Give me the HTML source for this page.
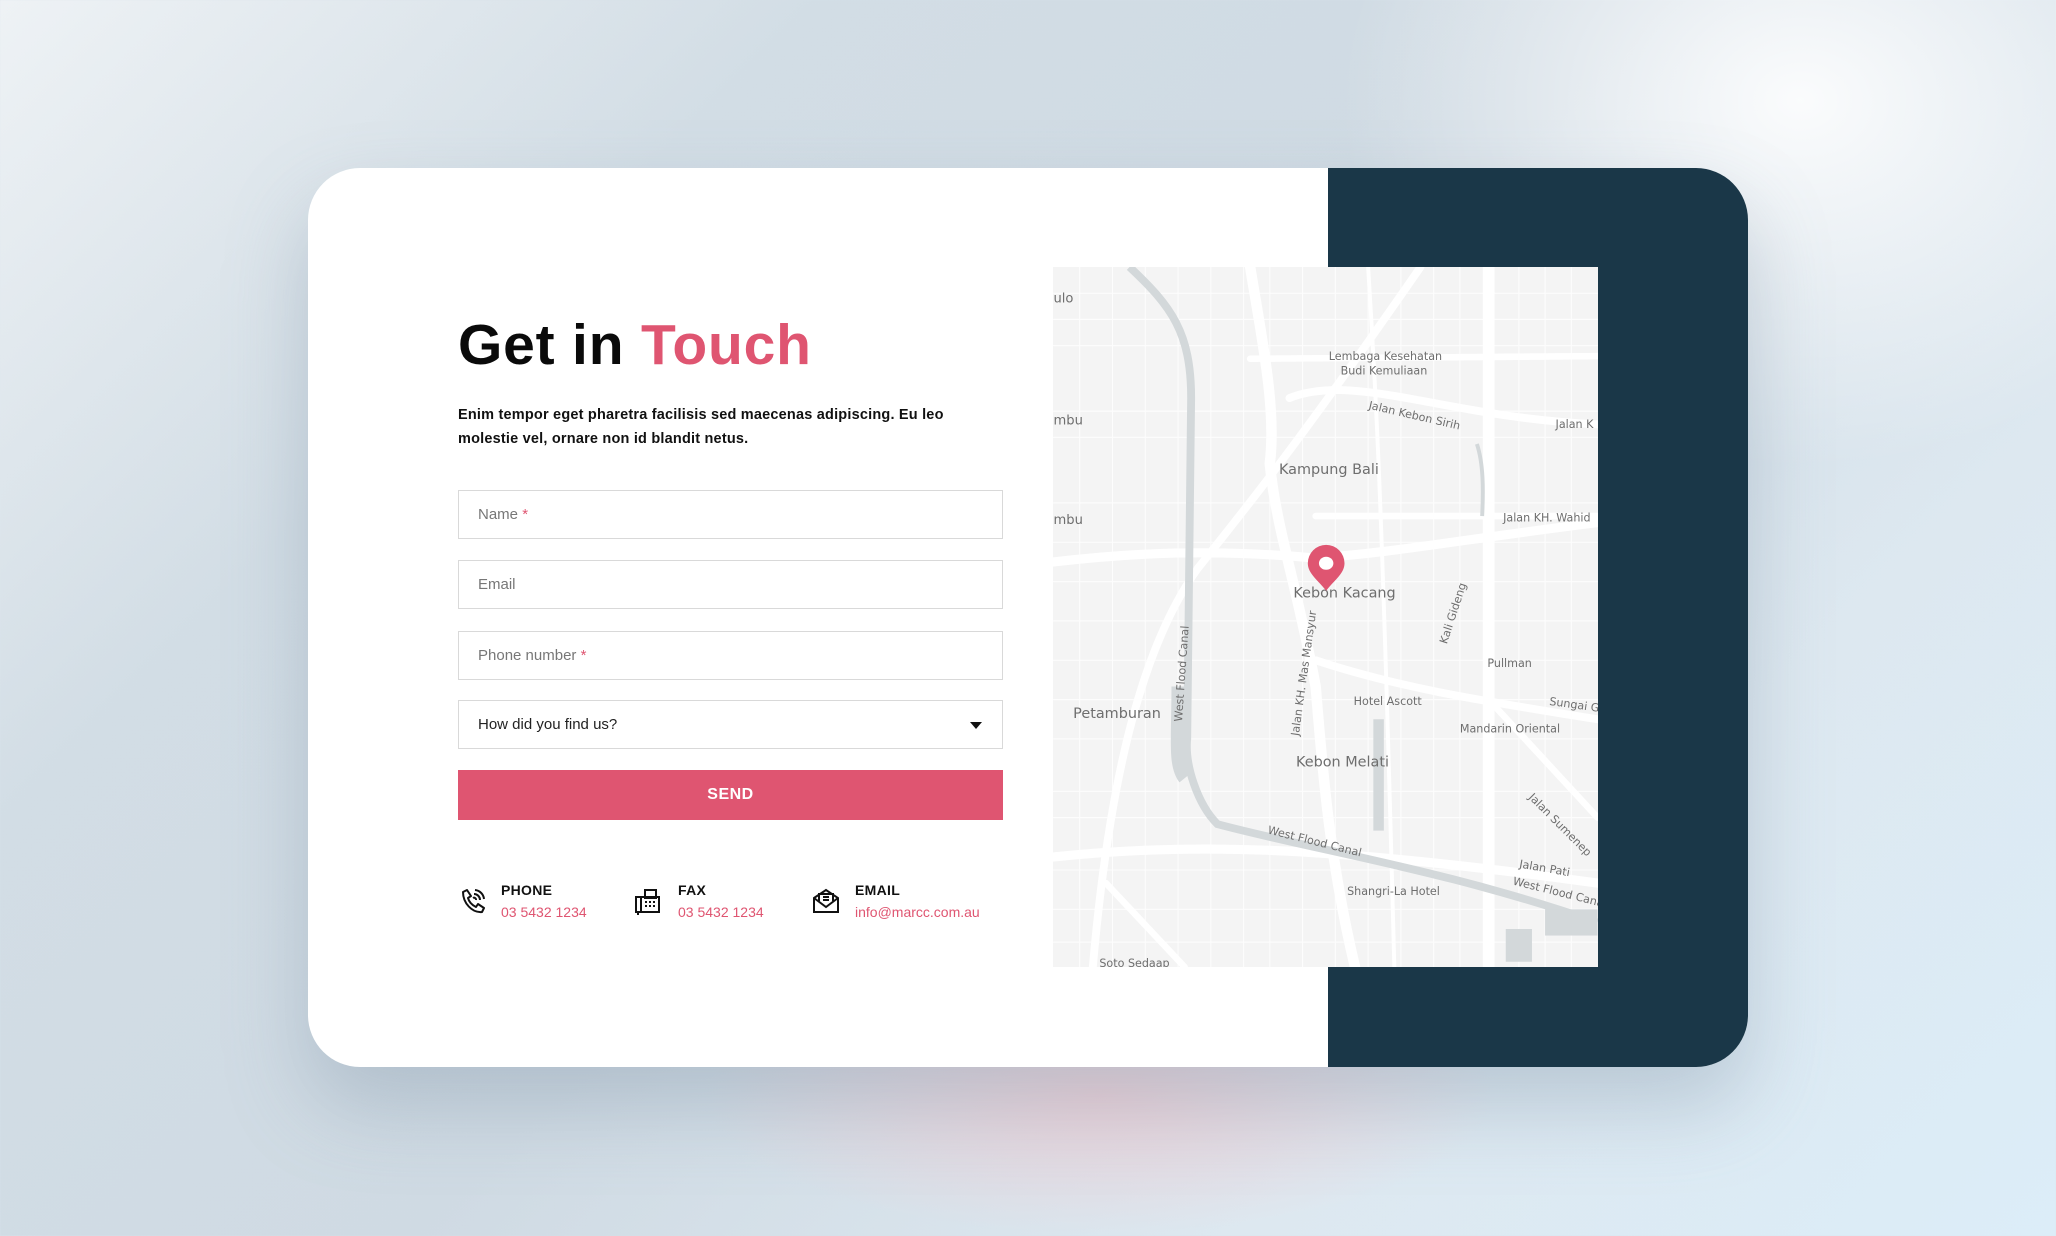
<!DOCTYPE html>
<html><head><meta charset="utf-8"><style>
*{margin:0;padding:0;box-sizing:border-box}
html,body{width:2056px;height:1236px;overflow:hidden}
body{font-family:"Liberation Sans",sans-serif;background:linear-gradient(135deg,#eef2f5 0%,#d2dde5 25%,#cfdae3 50%,#dde8f0 75%,#dcedf8 100%);position:relative}
.glow1{position:absolute;left:1300px;top:-300px;width:1000px;height:800px;background:radial-gradient(ellipse at center,rgba(255,255,255,.9),rgba(255,255,255,0) 65%)}
.glow2{position:absolute;left:700px;top:1000px;width:800px;height:236px;background:radial-gradient(ellipse at 50% 40%,rgba(240,205,212,.8),rgba(240,205,212,0) 70%)}
.card{position:absolute;left:308px;top:168px;width:1440px;height:899px;background:#fff;border-radius:52px;overflow:hidden;box-shadow:0 40px 80px rgba(120,140,160,.35)}
.dark{position:absolute;left:1020px;top:0;right:0;bottom:0;background:#1a3748}
h1{position:absolute;left:150px;top:144px;font-size:57px;font-weight:bold;color:#0a0a0a;letter-spacing:0.8px;white-space:nowrap}
h1 span{color:#df5571}
p.lead{position:absolute;left:150px;top:235px;width:540px;font-size:14.5px;font-weight:bold;line-height:24px;color:#111;letter-spacing:.2px}
.in{position:absolute;left:150px;width:545px;height:49px;border:1px solid #d9d9d9;font-size:15px;color:#777;padding:15px 19px}
.in b{color:#df5571;font-weight:normal}
.sel{color:#222}
.arr{position:absolute;right:20px;top:21px;border-left:6px solid transparent;border-right:6px solid transparent;border-top:7px solid #111}
.send{position:absolute;left:150px;top:602px;width:545px;height:50px;background:#df5571;color:#fff;font-weight:bold;font-size:16px;text-align:center;line-height:50px;letter-spacing:.5px}
.ct{position:absolute;top:714px}
.ct .t{font-size:14px;font-weight:bold;color:#111;letter-spacing:.3px}
.ct .v{font-size:14px;color:#df5571;margin-top:6px}
.ic{position:absolute;top:720px}
.map{position:absolute;left:745px;top:99px;width:545px;height:700px;background:#f4f4f4;overflow:hidden}
</style></head><body>
<div class="glow1"></div><div class="glow2"></div>
<div class="card">
<div class="dark"></div>
<h1>Get in <span>Touch</span></h1>
<p class="lead">Enim tempor eget pharetra facilisis sed maecenas adipiscing. Eu leo molestie vel, ornare non id blandit netus.</p>
<div class="in" style="top:322px">Name <b>*</b></div>
<div class="in" style="top:392px">Email</div>
<div class="in" style="top:463px">Phone number <b>*</b></div>
<div class="in sel" style="top:532px">How did you find us?<div class="arr"></div></div>
<div class="send">SEND</div>

<svg class="ic" style="left:150px" width="28" height="28" viewBox="0 0 28 28" fill="none" stroke="#111" stroke-width="2"><path d="M5 4l4-2 4 6-3 2c1 4 4 7 8 9l2-3 6 4-2 4c-10 1-19-9-19-20z" stroke-linejoin="round"/><path d="M16 6a6 6 0 0 1 6 6M17 2a10 10 0 0 1 9 9M15 10a2 2 0 0 1 3 2"/></svg>
<div class="ct" style="left:193px"><div class="t">PHONE</div><div class="v">03 5432 1234</div></div>

<svg class="ic" style="left:327px" width="26" height="28" viewBox="0 0 26 28" fill="none" stroke="#111" stroke-width="2"><rect x="1" y="9" width="5" height="15"/><path d="M3 24v3"/><rect x="6" y="9" width="18" height="15"/><rect x="10" y="2" width="11" height="8"/><path d="M10 14h2M14 14h2M18 14h2M10 18h2M14 18h2M18 18h2"/></svg>
<div class="ct" style="left:370px"><div class="t">FAX</div><div class="v">03 5432 1234</div></div>

<svg class="ic" style="left:505px" width="26" height="26" viewBox="0 0 26 26" fill="none" stroke="#111" stroke-width="2"><path d="M1 10l12-8 12 8v14H1z"/><path d="M1 10l12 9 12-9"/><path d="M6 13V6h14v7"/><path d="M10 9h6M10 12h6"/></svg>
<div class="ct" style="left:547px"><div class="t">EMAIL</div><div class="v">info@marcc.com.au</div></div>

<div class="map">
<svg width="545" height="700" viewBox="0 0 415 534" font-family="DejaVu Sans, sans-serif" fill="#6e6e6e">
<g stroke="#fff" fill="none" stroke-linecap="round">
<g stroke-width="0.8" stroke="#fdfdfd">
<path d="M0 20h415M0 40h415M0 60h415M0 110h415M0 130h415M0 180h415M0 210h415M0 240h415M0 270h415M0 300h415M0 330h415M0 360h415M0 400h415M0 420h415M0 460h415M0 490h415M0 515h415"/>
<path d="M20 0v534M45 0v534M70 0v534M95 0v534M120 0v534M145 0v534M165 0v534M190 0v534M215 0v534M240 0v534M265 0v534M290 0v534M310 0v534M355 0v534M375 0v534M395 0v534"/>
</g>
<path d="M0 225 C60 218 120 215 200 222 C260 218 310 208 415 195" stroke-width="7"/>
<path d="M150 0 C160 60 170 110 165 150 C170 200 185 240 200 320 C205 380 210 450 230 534" stroke-width="8"/>
<path d="M332 0 V534" stroke-width="9"/>
<path d="M180 100 C230 80 300 115 415 120" stroke-width="6"/>
<path d="M150 70 L415 68" stroke-width="5"/>
<path d="M30 534 C40 420 60 300 110 230 C150 180 190 130 280 0" stroke-width="6"/>
<path d="M0 450 C100 440 200 440 415 470" stroke-width="7"/>
<path d="M200 300 C260 320 320 330 415 345" stroke-width="6"/>
<path d="M332 330 L415 420" stroke-width="5"/>
<path d="M240 0 C245 80 250 150 260 534" stroke-width="3"/>
<path d="M100 534 L40 470 M200 190 H415" stroke-width="5"/>
</g>
<path d="M58 0 C90 30 105 50 105 100 L102 360 C100 380 110 410 125 425 C200 445 300 460 415 500" stroke="#d3d8da" stroke-width="6" fill="none"/>
<path d="M95 320 C95 360 92 380 100 390" stroke="#d3d8da" stroke-width="10" fill="none"/>
<path d="M248 345 V430" stroke="#d3d8da" stroke-width="8" fill="none"/>
<path d="M323 135 C328 150 328 170 327 190" stroke="#d3d8da" stroke-width="3" fill="none"/>
<rect x="345" y="505" width="20" height="25" fill="#d3d8da"/>
<rect x="375" y="490" width="40" height="20" fill="#d3d8da"/>
<g font-size="8.5">
<text x="210" y="71">Lembaga Kesehatan</text><text x="219" y="82">Budi Kemuliaan</text>
<text x="343" y="194">Jalan KH. Wahid</text>
<text x="331" y="305">Pullman</text>
<text x="229" y="334">Hotel Ascott</text>
<text x="310" y="355">Mandarin Oriental</text>
<text x="224" y="479">Shangri-La Hotel</text>
<text x="35" y="534">Soto Sedaap</text>
<text x="383" y="123">Jalan K</text>
<text x="0" y="27" font-size="10">ulo</text>
<text x="0" y="120" font-size="10">mbu</text>
<text x="0" y="196" font-size="10">mbu</text>
<text transform="translate(240 108) rotate(13)">Jalan Kebon Sirih</text>
<text transform="translate(187 358) rotate(-82)">Jalan KH. Mas Mansyur</text>
<text transform="translate(98 347) rotate(-86)">West Flood Canal</text>
<text transform="translate(163 432) rotate(14)">West Flood Canal</text>
<text transform="translate(350 471) rotate(14)">West Flood Canal</text>
<text transform="translate(362 405) rotate(45)">Jalan Sumenep</text>
<text transform="translate(355 458) rotate(10)">Jalan Pati</text>
<text transform="translate(300 288) rotate(-72)">Kali Gideng</text>
<text transform="translate(378 334) rotate(8)">Sungai G</text>
</g>
<g font-size="11">
<text x="172" y="158">Kampung Bali</text>
<text x="183" y="252">Kebon Kacang</text>
<text x="15" y="344">Petamburan</text>
<text x="185" y="381">Kebon Melati</text>
</g>
<path d="M208 212 a14 14 0 0 1 14 14 c0 8 -8 13 -14 21 c-6 -8 -14 -13 -14 -21 a14 14 0 0 1 14 -14z" fill="#df5571"/>
<ellipse cx="208" cy="226" rx="5.5" ry="5" fill="#fff"/>
</svg>
</div>
</div>
</body></html>
